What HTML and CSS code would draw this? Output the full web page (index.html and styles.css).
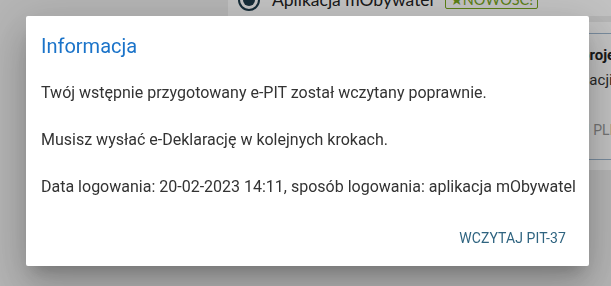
FILE: index.html
```html
<!DOCTYPE html>
<html>
<head>
    <title>Informacja</title>
    <link rel="stylesheet" href="styles.css">
</head>
<body>
    <div class="page">
        <div class="option">
            <span class="radio"><span class="radio-dot"></span></span>
            <span class="option-label">Aplikacja mObywatel</span>
            <span class="badge">&#9733;NOWOŚĆ!</span>
        </div>
        <div class="below">
            <aside class="side-card">
                <div class="side-inner">
                    <div class="side-title">Twój projekt</div>
                    <div class="side-text">Informacji</div>
                    <div class="side-link">DODAJ PLIK</div>
                </div>
            </aside>
        </div>
    </div>

    <div class="overlay"></div>

    <div class="dialog">
        <h2 class="dialog-title">Informacja</h2>
        <div class="dialog-body">
            <p>Twój wstępnie przygotowany e-PIT został wczytany poprawnie.</p>
            <p>Musisz wysłać e-Deklarację w kolejnych krokach.</p>
            <p>Data logowania: 20-02-2023 14:11, sposób logowania: aplikacja mObywatel</p>
        </div>
        <div class="dialog-actions">
            <button class="btn-text">Wczytaj PIT-37</button>
        </div>
    </div>
</body>
</html>
```

FILE: styles.css
```css
html,
body {
    margin: 0;
    height: 100%;
    overflow: hidden;
}

body {
    background-color: #eeeeee;
    font-family: "Open Sans", Arial, sans-serif;
}

.page {
    margin-top: -17px;
    padding-left: 228px;
}

.option {
    display: flex;
    align-items: center;
    gap: 11px;
    height: 33px;
    padding-left: 10px;
    background-color: #fff;
}

.radio {
    width: 18px;
    height: 18px;
    border: 2px solid #1d3b4a;
    border-radius: 50%;
    display: flex;
    align-items: center;
    justify-content: center;
    margin-right: 1px;
}

.radio-dot {
    width: 12px;
    height: 12px;
    border-radius: 50%;
    background-color: #1d3b4a;
}

.option-label {
    font-family: Lato, sans-serif;
    font-size: 17.5px;
    color: #222;
}

.badge {
    font-family: Lato, sans-serif;
    font-size: 14.5px;
    color: #78a81c;
    border: 1px solid #78a81c;
    border-radius: 2px;
    padding: 0 4px;
}

.below {
    padding: 6px 0 0 317px;
}

.side-card {
    background-color: #fff;
    padding: 11px 0 10px;
    white-space: nowrap;
    overflow: hidden;
    font-family: Roboto, sans-serif;
}

.side-inner {
    border-top: 1px solid #9fb8d0;
    border-bottom: 1px solid #9fb8d0;
    padding: 11px 0 19px 0;
}

.side-title {
    font-weight: bold;
    font-size: 15px;
    line-height: 20px;
    color: #222;
}

.side-text {
    font-size: 15px;
    line-height: 20px;
    color: #333;
    margin-top: 5px;
}

.side-link {
    font-size: 14px;
    line-height: 20px;
    color: #999;
    margin-top: 30px;
}

.overlay {
    position: fixed;
    inset: 0;
    background-color: rgba(0, 0, 0, 0.24);
}

.dialog {
    position: fixed;
    left: 26px;
    top: 16px;
    width: 563px;
    height: 250px;
    box-sizing: border-box;
    padding: 18px 10px 0 15px;
    background-color: #fff;
    border-radius: 2px;
    font-family: Roboto, sans-serif;
    box-shadow: 0 11px 15px -7px rgba(0, 0, 0, 0.2),
        0 24px 38px 3px rgba(0, 0, 0, 0.14),
        0 9px 46px 8px rgba(0, 0, 0, 0.12);
}

.dialog-title {
    margin: 0;
    font-size: 20px;
    font-weight: normal;
    line-height: 24px;
    color: #1a73c9;
}

.dialog-body {
    margin-top: 23px;
    color: #333;
    font-size: 16px;
    white-space: nowrap;
}

.dialog-body p {
    margin: 0 0 23px;
    line-height: 24px;
}

.dialog-actions {
    display: flex;
    justify-content: flex-end;
    padding-right: 5px;
}

.btn-text {
    background: none;
    border: none;
    padding: 8px 8px;
    font-family: Roboto, sans-serif;
    font-size: 14px;
    line-height: 16px;
    letter-spacing: 0.1px;
    text-transform: uppercase;
    color: #2f6480;
    cursor: pointer;
}
```
